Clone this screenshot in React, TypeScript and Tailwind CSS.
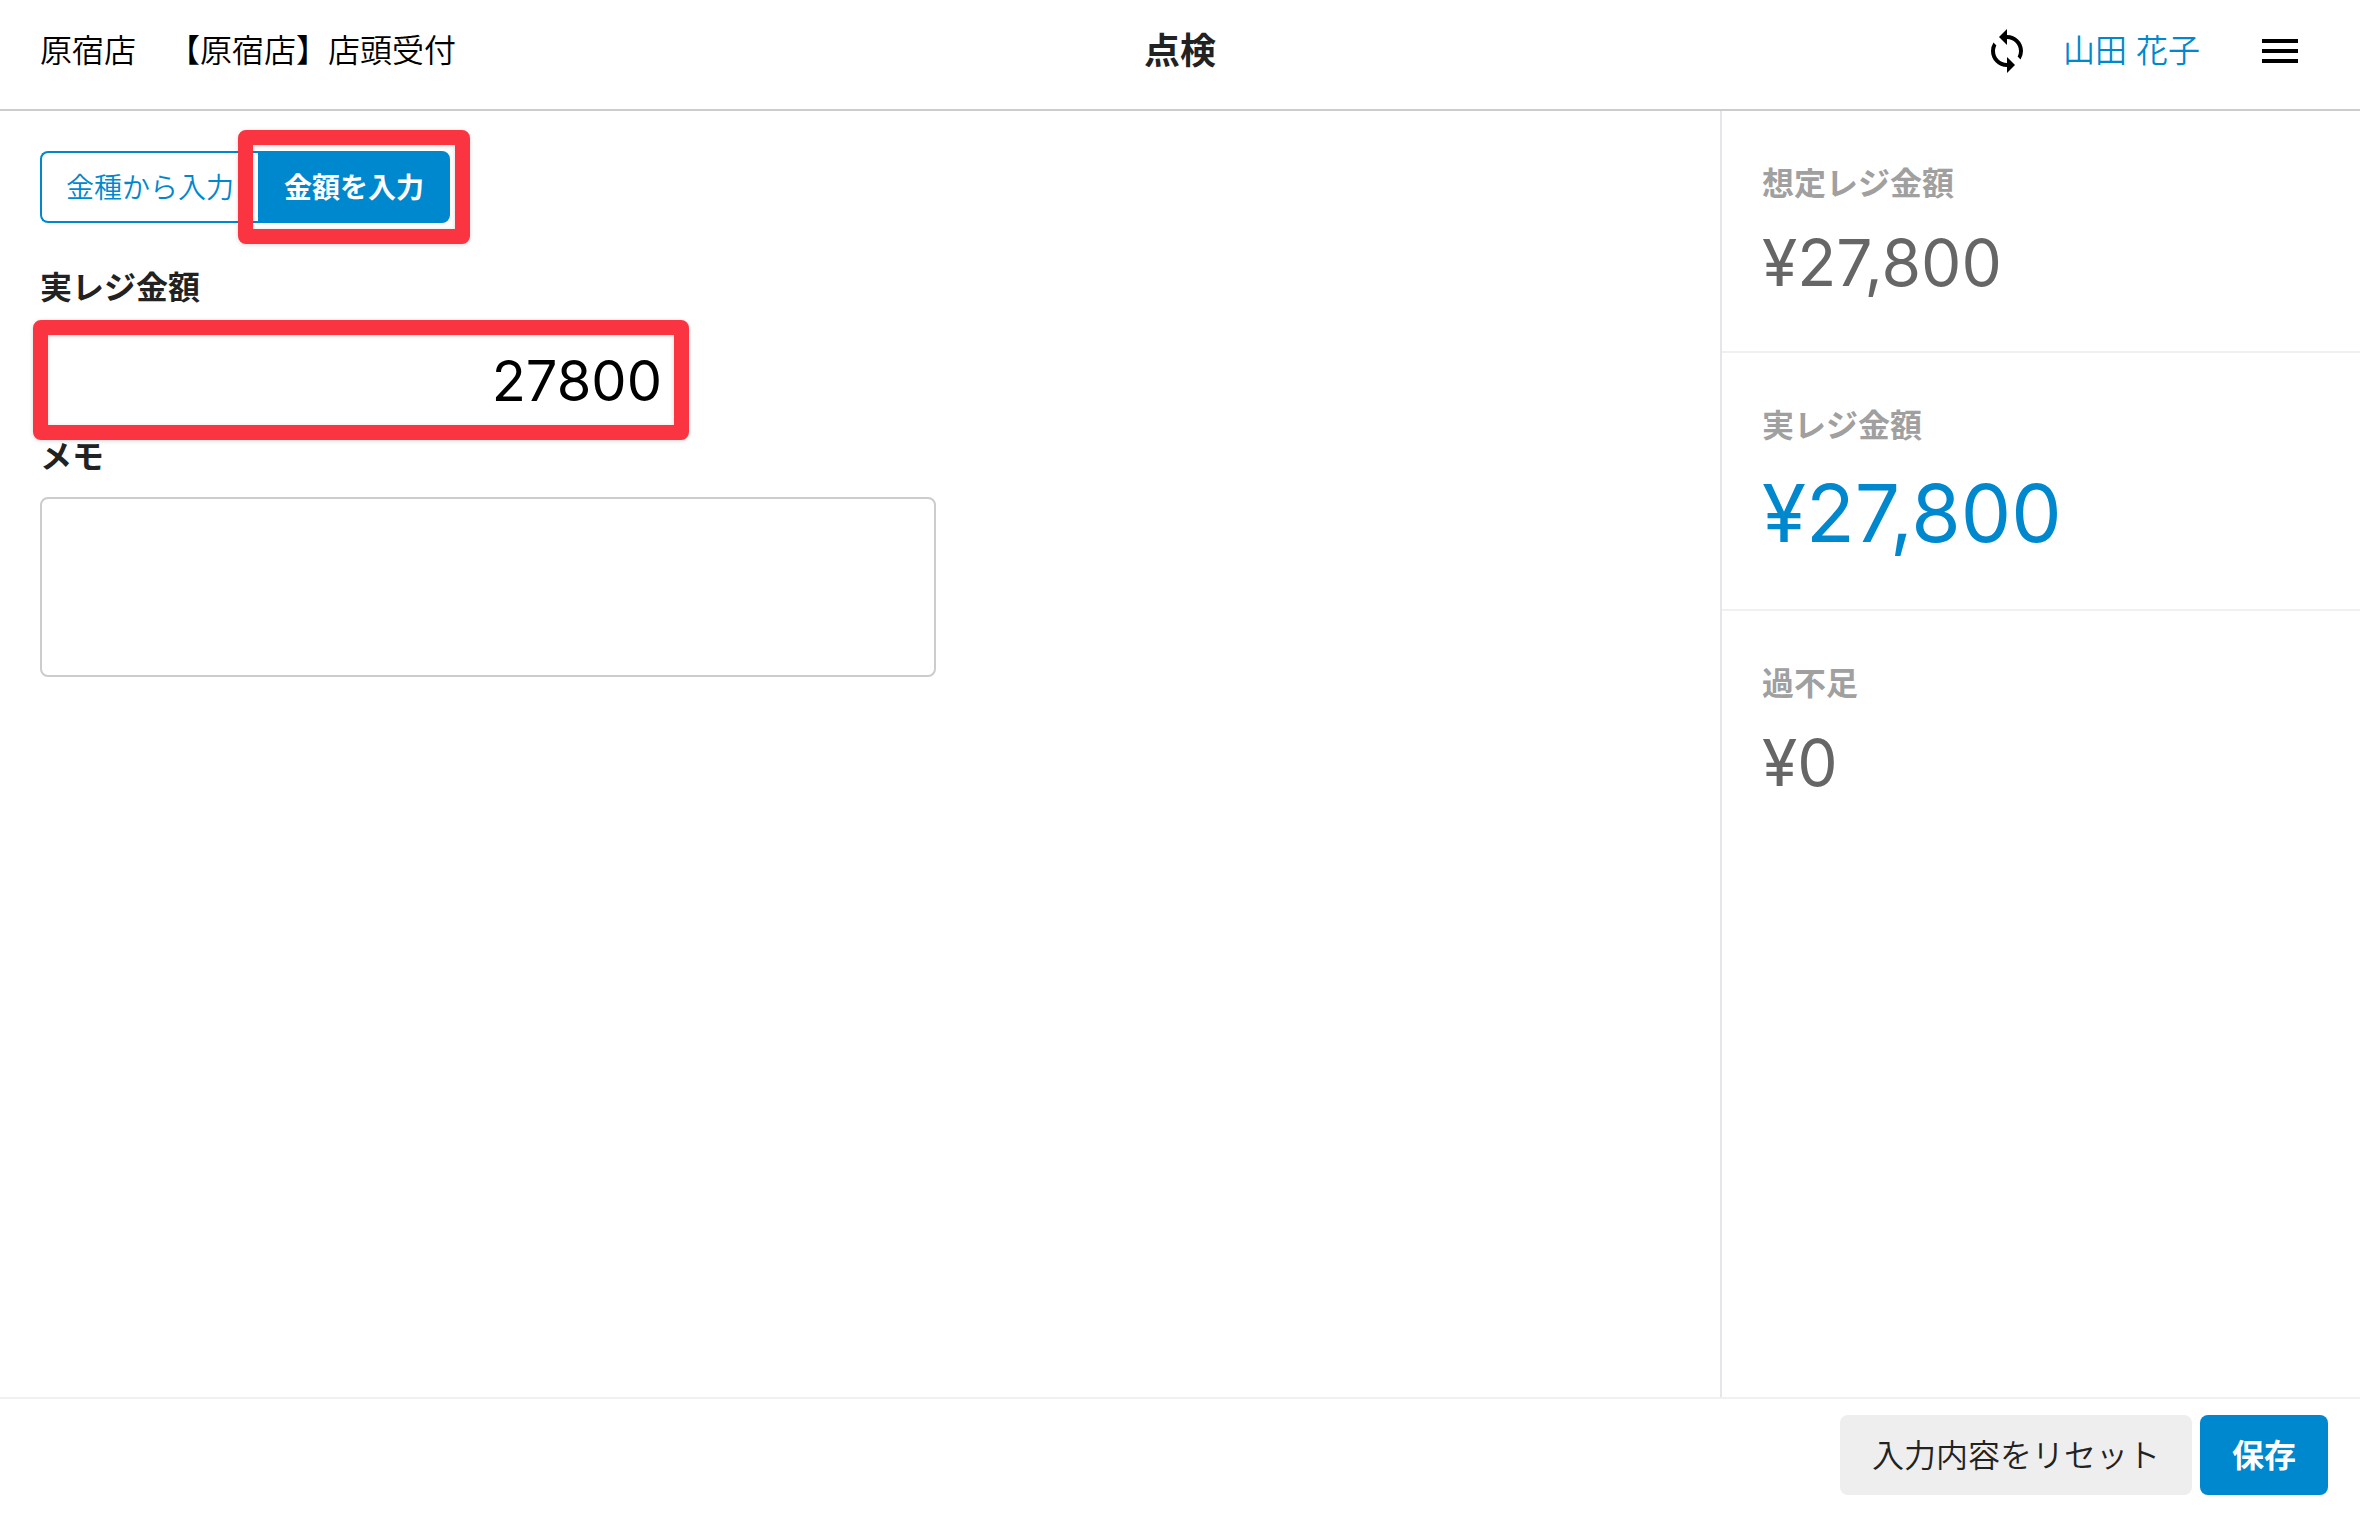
import { useState } from 'react';
import { MdLoop, MdMenu } from 'react-icons/md';

function Highlight({ className }: { className: string }) {
  return (
    <span
      aria-hidden="true"
      className={`pointer-events-none absolute rounded-lg bg-transparent drop-shadow-sm ${className}`}
    >
      <span className="block h-full rounded-lg border-[15px] border-[#fb3442]" />
    </span>
  );
}

function Summary({ label, value, large = false, last = false }: { label: string; value: string; large?: boolean; last?: boolean }) {
  return (
    <section className={`px-10 pt-[49px] pb-10 ${last ? '' : 'border-b-2 border-[#f0f0f0]'}`}>
      <h2 className="text-[32px] leading-[48px] font-bold text-[#a0a0a0]">{label}</h2>
      <p
        className={
          large
            ? 'mt-[7px] text-[80px] leading-[112px] text-[#0088cf]'
            : 'mt-[7px] text-[64px] leading-[96px] text-[#666666]'
        }
      >
        {value}
      </p>
    </section>
  );
}

export default function App() {
  const [amount, setAmount] = useState('27800');
  const [memo, setMemo] = useState('');

  return (
    <div className="flex min-h-screen flex-col bg-white font-['Inter','Noto_Sans_CJK_JP',sans-serif] text-[32px] leading-[48px] text-[#222222]">
      <header className="grid grid-cols-[1fr_auto_1fr] items-center border-b-2 border-[#cccccc] px-10 pt-[27px] pb-[34px] text-black">
        <div className="flex gap-8 font-[350]">
          <span>原宿店</span>
          <span>【原宿店】店頭受付</span>
        </div>
        <h1 className="text-[36px] leading-[48px] font-bold text-[#222222]">点検</h1>
        <div className="flex items-center justify-end pr-4">
          <button type="button" aria-label="更新">
            <MdLoop className="size-12" />
          </button>
          <a href="#" className="ml-8 font-[350] text-[#0088cf]">山田 花子</a>
          <button type="button" aria-label="メニュー" className="ml-14">
            <MdMenu className="size-12" />
          </button>
        </div>
      </header>

      <div className="flex grow">
        <main className="grow px-10 pt-10">
          <div className="flex text-[28px] leading-[40px]">
            <button
              type="button"
              className="rounded-l-lg border-2 border-r-0 border-[#0088cf] px-6 pt-[15px] pb-[13px] font-[350] text-[#0088cf]"
            >
              金種から入力
            </button>
            <div className="relative flex">
              <button
                type="button"
                className="rounded-r-lg border-2 border-[#0088cf] bg-[#0088cf] px-6 pt-[15px] pb-[13px] font-bold text-white"
              >
                金額を入力
              </button>
              <Highlight className="-inset-x-5 -inset-y-[21px]" />
            </div>
          </div>

          <label htmlFor="amount" className="mt-[41px] block font-bold">実レジ金額</label>
          <div className="relative mt-[15px] w-[642px] max-w-full">
            <input
              id="amount"
              type="text"
              inputMode="numeric"
              value={amount}
              onChange={(e) => setAmount(e.target.value)}
              className="block h-[106px] w-full rounded-lg border-2 border-[#cccccc] px-[18px] pt-[2px] text-right text-[56px] text-black outline-none"
            />
            <Highlight className="-inset-[7px]" />
          </div>

          <label htmlFor="memo" className="block font-bold">メモ</label>
          <textarea
            id="memo"
            value={memo}
            onChange={(e) => setMemo(e.target.value)}
            className="mt-4 block h-[180px] w-[896px] max-w-full resize-none rounded-lg border-2 border-[#cccccc] p-4 outline-none"
          />
        </main>

        <aside className="w-[640px] shrink-0 border-l-2 border-[#e5e5ea]">
          <Summary label="想定レジ金額" value="¥27,800" />
          <Summary label="実レジ金額" value="¥27,800" large />
          <Summary label="過不足" value="¥0" last />
        </aside>
      </div>

      <footer className="flex justify-end gap-2 border-t-2 border-[#f0f0f0] px-8 pt-4 pb-[30px]">
        <button type="button" className="rounded-lg bg-[#eeeeee] px-8 pt-[17px] pb-[15px] font-[350]">
          入力内容をリセット
        </button>
        <button type="button" className="rounded-lg bg-[#0088cf] px-8 pt-[17px] pb-[15px] font-bold text-white">
          保存
        </button>
      </footer>
    </div>
  );
}
